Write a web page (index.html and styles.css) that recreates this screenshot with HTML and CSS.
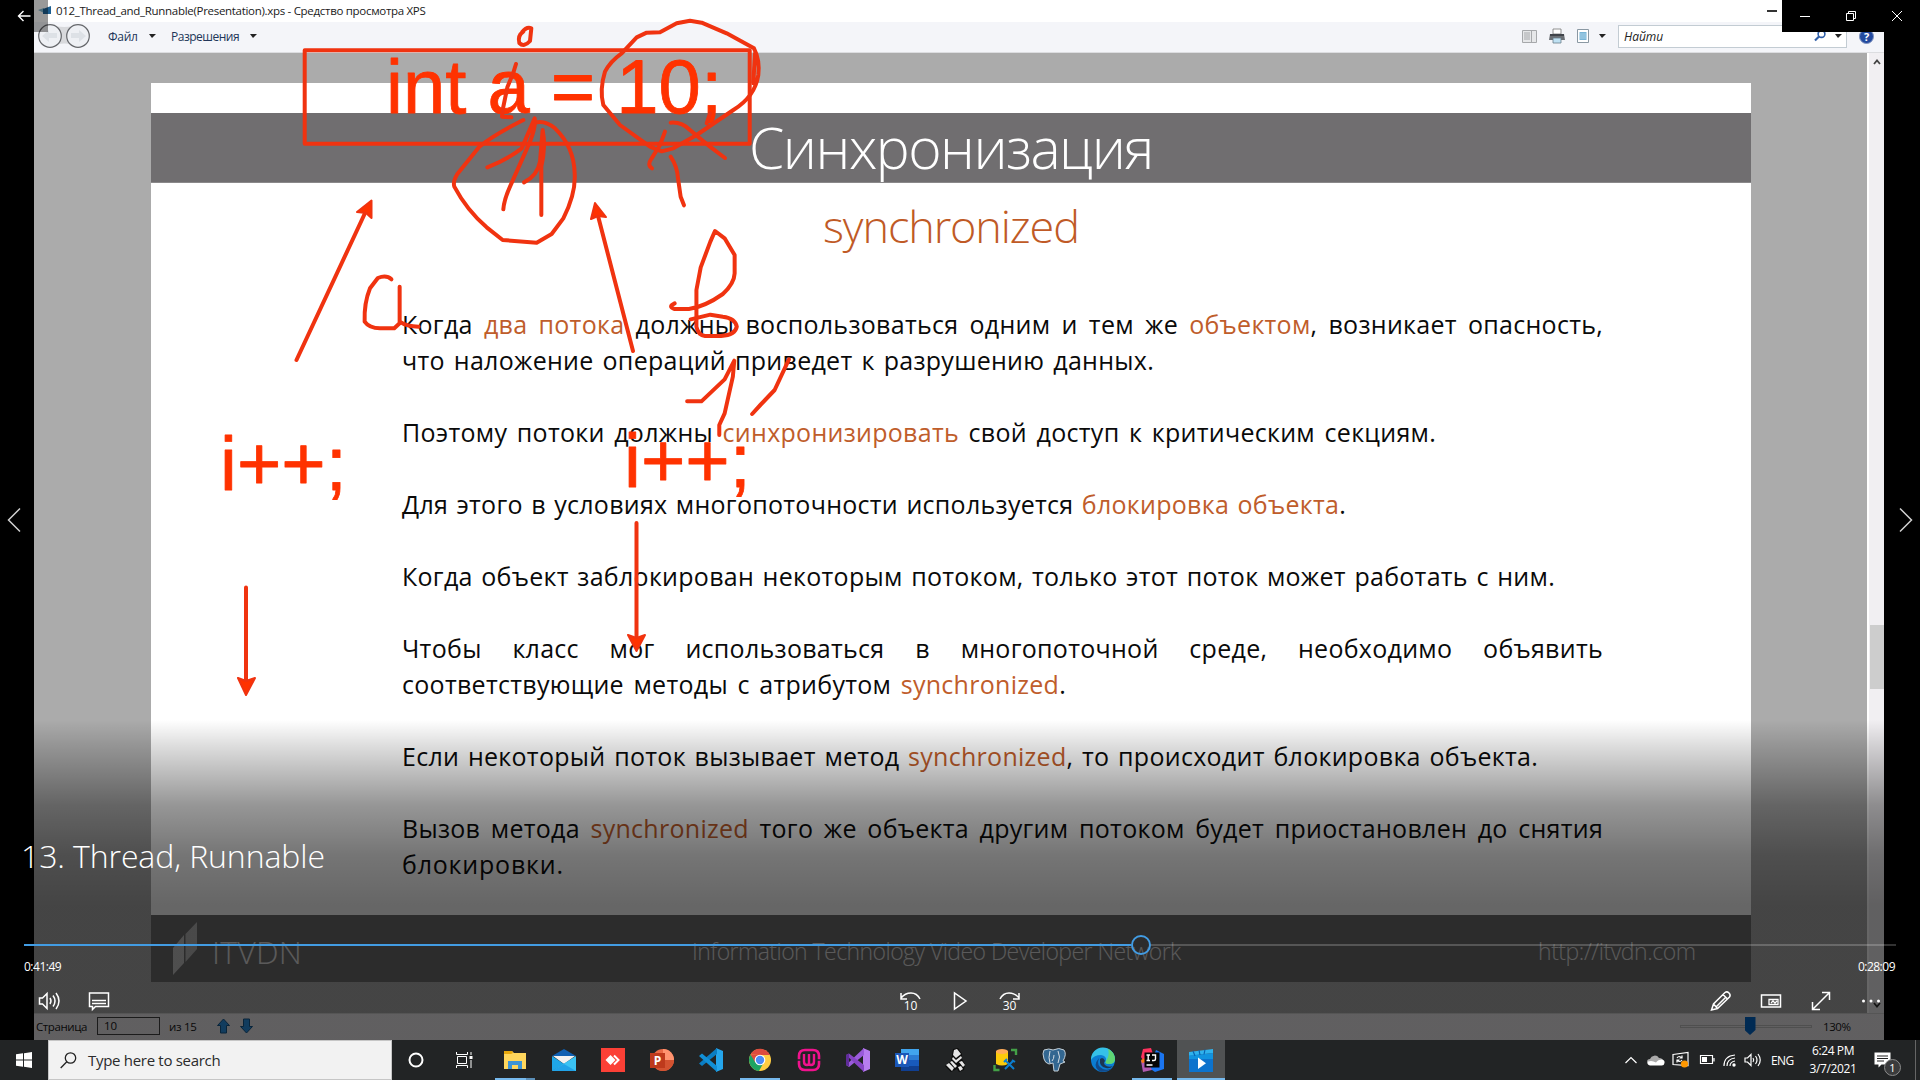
FILE: index.html
```html
<!DOCTYPE html>
<html lang="en">
<head>
<meta charset="utf-8">
<title>13. Thread, Runnable</title>
<link rel="stylesheet" href="styles.css">
</head>
<body>
<main class="player">
  <section class="viewer">
    <div class="titlebar">
      <svg class="app-icon" width="13" height="10" viewBox="0 0 13 10"><path d="M0 4l6-2v5z" fill="#7db4cc"/><path d="M5 3l8-3v8H5z" fill="#1d5f91"/></svg>
      <span class="titlebar-text">012_Thread_and_Runnable(Presentation).xps - Средство просмотра XPS</span>
      <span class="titlebar-min"></span>
    </div>
    <div class="toolbar">
      <svg class="nav-pair" width="54" height="28" viewBox="0 0 54 28"><path d="M12 3q15 4 31 0l5 21q-21-5-40 0z" fill="#d8d9dc"/><g fill="#eef0f4" stroke="#65676b" stroke-width="1.2"><circle cx="13" cy="14" r="11.3"/><circle cx="41" cy="14" r="11.3"/></g><g fill="#dde1e6"><path d="M5 14l7-6v3h8v5h-8v4z"/><path d="M49 14l-7-6v3h-8v5h8v4z"/></g></svg>
      <span class="menu menu-file">Файл</span><i class="caret"></i>
      <span class="menu menu-perm">Разрешения</span><i class="caret caret-perm"></i>
      <div class="toolbar-right">
        <svg width="15" height="15" viewBox="0 0 15 15"><path d="M.5 1.5h14v12H.5z" fill="#e6e7e9" stroke="#a6a8ab"/><path d="M9.5 2v11M2 4h6M2 6h6M2 8h6M2 10h6" stroke="#a6a8ab"/></svg>
        <svg width="16" height="16" viewBox="0 0 16 16"><path d="M4 1h8v5H4z" fill="#fff" stroke="#777" stroke-width=".8"/><path d="M1 6h14l1 6H0z" fill="#6b6f74"/><path d="M1 7h14" stroke="#2f3338" stroke-width="1.4"/><path d="M4 10h8v5H4z" fill="#bfe1f3" stroke="#6b7f8a" stroke-width=".8"/></svg>
        <svg width="12" height="15" viewBox="0 0 12 15"><path d="M.5.5h11v13H.5z" fill="#fff" stroke="#8a98a3"/><path d="M2.5 3h7v8h-7z" fill="#78b4d6"/><path d="M3 5h6M3 7h6M3 9h6" stroke="#bfe0f0" stroke-width=".7"/></svg>
        <i class="caret"></i>
        <div class="find"><span>Найти</span>
          <svg width="14" height="12" viewBox="0 0 14 12"><circle cx="8.5" cy="4" r="3.4" fill="none" stroke="#2f5ea8" stroke-width="1.6"/><path d="M6 6.5L2 10.5" stroke="#2f5ea8" stroke-width="2.2"/></svg>
          <i class="caret"></i></div>
        <div class="help">?</div>
      </div>
    </div>
    <div class="workspace">
      <article class="slide">
        <h1 class="slide-head"><span>Синхронизация</span></h1>
        <h2 class="slide-sub">synchronized</h2>
        <div class="slide-body">
          <p><span class="ln w-full">Когда <b>два потока</b> должны воспользоваться одним и тем же <b>объектом</b>, возникает опасность,</span><span class="ln w-2">что наложение операций приведет к разрушению данных.</span></p>
          <p><span class="ln w-3">Поэтому потоки должны <b>синхронизировать</b> свой доступ к критическим секциям.</span></p>
          <p><span class="ln w-4">Для этого в условиях многопоточности используется <b>блокировка объекта</b>.</span></p>
          <p><span class="ln w-5">Когда объект заблокирован некоторым потоком, только этот поток может работать с ним.</span></p>
          <p><span class="ln w-full">Чтобы класс мог использоваться в многопоточной среде, необходимо объявить</span><span class="ln w-7">соответствующие методы с атрибутом <b>synchronized</b>.</span></p>
          <p><span class="ln w-8">Если некоторый поток вызывает метод <b>synchronized</b>, то происходит блокировка объекта.</span></p>
          <p><span class="ln w-full">Вызов метода <b>synchronized</b> того же объекта другим потоком будет приостановлен до снятия</span><span class="ln w-10">блокировки.</span></p>
        </div>
        <footer class="slide-foot">
          <svg width="26" height="54" viewBox="0 0 26 54"><path d="M0 26L11 13v28L0 53z" fill="#c4c4c4"/><path d="M12.500 12L24 0v27L12.500 40z" fill="#d0d0d0" opacity=".75"/></svg>
          <span class="brand">ITVDN</span>
          <span class="network">Information Technology Video Developer Network</span>
          <span class="site">http://itvdn.com</span>
        </footer>
      </article>
      <div class="scrollbar">
        <svg width="8" height="6" viewBox="0 0 8 6"><path d="M1 5l3-3.500L7 5" fill="none" stroke="#444" stroke-width="1.800"/></svg>
        <i class="scroll-thumb"></i>
        <svg width="8" height="6" viewBox="0 0 8 6"><path d="M1 1l3 3.500L7 1" fill="none" stroke="#333" stroke-width="1.800"/></svg>
      </div>
    </div>
    <div class="statusbar">
      <span class="st-label">Страница</span><span class="st-input">10</span><span class="st-of">из 15</span>
      <svg width="38" height="16" viewBox="0 0 38 16" fill="#2b96ea" stroke="#16598f"><path d="M7.500 1l6 6.500h-3V15h-6V7.500h-3z"/><path d="M30.500 15l6-6.500h-3V1h-6v7.500h-3z"/></svg>
      <span class="zoom-track"><i class="zoom-thumb"></i></span><span class="zoom-val">130%</span>
    </div>
  </section>

  <svg class="ink" width="1920" height="1040" viewBox="0 0 1920 1040">
    <rect x="304.700" y="50.300" width="445" height="93.500"/>
    <g class="ink-text">
      <text x="386" y="112.500" textLength="336">int a = 10;</text>
      <text x="220" y="490">i++;</text>
      <text x="624" y="486.500">i++;</text>
    </g>
    <g transform="scale(.33333) translate(840 0)">
      <path d="M730 95q-18 12-12 34q14 14 32-6l4-38q-14-6-28 12"/>
      <path d="M708 192L700 218L682 262L668 330L666 350L694 352"/>
      <path d="M730 360Q640 405 598 440L532 522Q518 545 523 560Q560 630 620 682L668 720L770 728L815 702L850 655Q888 580 884 520Q882 440 825 385Q795 360 765 368"/>
      <path d="M622 502Q680 480 725 445L764 355Q768 380 750 425L690 560Q672 600 670 628M764 365L745 400"/>
      <path d="M732 547Q772 528 780 485L788 390Q798 440 784 500V645"/>
      <path d="M1025 160L1070 112L1100 98L1140 97L1190 70L1230 62L1265 68L1340 100L1422 145Q1440 180 1435 225Q1425 290 1360 330L1250 405L1180 445L1145 454L1110 440L1020 375L970 315Q958 270 975 215Q990 185 1025 160M1425 160L1420 250"/>
      <path d="M1172 368Q1205 365 1230 390L1290 440L1335 474M1155 395L1140 435L1115 475Q1100 495 1116 505"/>
      <path d="M1172 470Q1192 500 1194 535L1202 590L1212 616M1290 340L1280 370"/>
    </g>
    <path d="M366 211L296.500 360M597 212L633 351M636.500 523V645M246 587.500V688"/>
    <g class="heads"><path d="M371.500 200.500V218L366 213L357 212z"/><path d="M595 203L606 217L598 216L591 219z"/><path d="M636.500 651L628 635L636.500 638L645 635z"/><path d="M246 695L238 678L246 681L255 678z"/></g>
    <g transform="translate(280 180) scale(.35714 .33333)">
      <path d="M312 298Q298 284 274 294L252 325Q235 370 237 425Q250 445 280 445H320L335 430V320V425Q355 440 388 440"/>
      <path d="M1105 370Q1085 380 1105 387H1145Q1190 380 1240 342Q1272 310 1273 280V225L1245 175L1218 153L1205 185L1178 262L1166 330V440Q1170 465 1190 468H1235Q1275 465 1279 440Q1275 415 1240 410L1205 404L1150 418"/>
      <path d="M1140 664H1180L1245 598L1272 542L1268 590L1245 700L1230 735V765M1425 538L1385 630L1345 675L1322 702"/>
    </g>
  </svg>

  <div class="shade"></div>

  <div class="back-btn"><svg width="14" height="12" viewBox="0 0 14 12"><path d="M13.500 6H1.500M6.500 1L1.500 6l5 5" fill="none" stroke="#fff" stroke-width="1.400"/></svg></div>
  <div class="win-controls">
    <svg width="10" height="10" viewBox="0 0 10 10"><path d="M0 5.500h10"/></svg>
    <svg width="10" height="10" viewBox="0 0 10 10"><path d="M.5 2.500h7v7h-7zM2.500 2.500v-2h7v7h-2"/></svg>
    <svg width="10" height="10" viewBox="0 0 10 10"><path d="M0 0l10 10M10 0L0 10"/></svg>
  </div>
  <svg class="page-arrow prev" width="14" height="26" viewBox="0 0 14 26"><path d="M13 1.500L1.500 13L13 24.500"/></svg>
  <svg class="page-arrow next" width="14" height="26" viewBox="0 0 14 26"><path d="M1 1.500L12.500 13L1 24.500"/></svg>

  <div class="controls">
    <div class="video-title">13. Thread, Runnable</div>
    <div class="seek"><i class="played"></i><i class="knob"></i><i class="rest"></i></div>
    <div class="times"><span>0:41:49</span><span>0:28:09</span></div>
    <div class="buttons">
      <div class="group">
        <svg viewBox="0 0 22 20"><path d="M1.500 7v6h3L9 17.500v-15L4.500 7z"/><path d="M12 7q2 3 0 6M15 4.500q4 5.500 0 11M18 2q6 8 0 16"/></svg>
        <svg viewBox="0 0 22 20"><path d="M1.500 2h19v13.500H7.500l-3 3v-3h-3zM4 9.500h14M4 12.500h14"/></svg>
      </div>
      <div class="group">
        <svg viewBox="0 0 22 20"><path d="M2 7Q6 2 12 2T21 8M2 2v6h6"/><text x="11.500" y="18.500">10</text></svg>
        <svg viewBox="0 0 22 20"><path d="M5.500 2v16L17 10z"/></svg>
        <svg viewBox="0 0 22 20"><path d="M20 7Q16 2 10 2T1 8M20 2v6h-6"/><text x="10.500" y="18.500">30</text></svg>
      </div>
      <div class="group">
        <svg viewBox="0 0 22 20"><path d="M1.500 19l2-6L15 1.500q2-1.500 4 .5t.5 4L7.500 17.500zM13 3.500l4.500 4.500M3.500 13l4 4.500M16 6L6 16"/></svg>
        <svg viewBox="0 0 22 20"><path d="M1.500 4h19v12h-19z"/><path d="M9 8.500h9v5H9zM11 12l2-2 2 2 2-2" stroke-width="1.300"/></svg>
        <svg viewBox="0 0 22 20"><path d="M2.500 18.500l17-17M12 1.500h7.500V9M2.500 11v7.500H10"/></svg>
        <svg viewBox="0 0 22 20"><g fill="#fff" stroke="none"><circle cx="3.500" cy="10" r="1.500"/><circle cx="11" cy="10" r="1.500"/><circle cx="18.500" cy="10" r="1.500"/></g></svg>
      </div>
    </div>
  </div>
</main>

<nav class="taskbar">
  <div class="slot"><svg width="16" height="16" viewBox="0 0 16 16" fill="#fff"><path d="M0 2.300L7 1.300v6.200H0zM8 1.200L16 0v7.500H8zM0 8.500h7v6.200l-7-1zM8 8.500h8V16l-8-1.200z"/></svg></div>
  <div class="search"><svg width="17" height="17" viewBox="0 0 17 17"><circle cx="10.500" cy="6" r="5.200"/><path d="M6.800 9.800L.7 16"/></svg><span>Type here to search</span></div>
  <div class="slot"><svg width="16" height="16" viewBox="0 0 16 16"><circle cx="8" cy="8" r="6.500" fill="none" stroke="#fff" stroke-width="2"/></svg></div>
  <div class="slot"><svg width="17" height="16" viewBox="0 0 17 16" fill="none" stroke="#fff"><path d="M1.500 4.500h9v7h-9zM.5 0v2.500h11V0M.5 16v-2.500h11V16M15 0v3M15 8v8"/><path d="M13.500 4h3v3h-3z" fill="#fff" stroke="none"/></svg></div>
  <div class="apps">
    <div class="slot run multi"><svg viewBox="0 0 24 24"><path d="M1 3h8l2 2h12v16H1z" fill="#ffd65c"/><path d="M1 3h8l1 2-2 1H1z" fill="#e8a80c"/><path d="M5 13h14v8h-4v-4H9v4H5z" fill="#3d94d6"/></svg></div>
    <div class="slot"><svg viewBox="0 0 24 24"><path d="M0 8L12 1l12 7z" fill="#0f5fb2"/><path d="M1 8h22L12 16z" fill="#f1f1f1"/><path d="M0 8l12 8-12 7z" fill="#1fa7e8"/><path d="M24 8v15H0z" fill="#3bc3f4"/><path d="M12 16l12 7H0z" fill="#21a3e8"/></svg></div>
    <div class="slot"><svg viewBox="0 0 24 24"><path d="M0 0h24v24H0z" fill="#fb4036"/><path d="M9.500 7l5 5-5 5-5-5z" fill="#fff"/><path d="M13 7.500l4.500 4.500-4.500 4.500" fill="none" stroke="#fff" stroke-width="2"/></svg></div>
    <div class="slot"><svg viewBox="0 0 24 24"><circle cx="13" cy="12" r="11" fill="#ea6b47"/><path d="M13 1a11 11 0 0 1 11 11H13z" fill="#ff9470"/><path d="M2 12h22a11 11 0 0 1-22 0z" fill="#d35230"/><path d="M0 5h15v15H0z" fill="#be3a1c"/><text x="7.500" y="16.500">P</text></svg></div>
    <div class="slot"><svg viewBox="0 0 24 24"><path d="M17 0l7 3v18l-7 3z" fill="#25a6ec"/><path d="M18 0v6L3 18l-3-2.500z" fill="#0a7dc3"/><path d="M0 8l3-2.500L18 18v6z" fill="#118fd6"/></svg></div>
    <div class="slot run"><svg viewBox="0 0 24 24"><circle cx="12" cy="12" r="11" fill="#ffcd42"/><path d="M2.500 6.500a11 11 0 0 1 19.500 0.500H12z" fill="#dd4b3e"/><path d="M2.500 6.500A11 11 0 0 0 11 23l5-9-8-1z" fill="#1da462"/><path d="M2.500 6.500L7 14l5-7z" fill="#dd4b3e"/><circle cx="12" cy="12" r="5.300" fill="#fff"/><circle cx="12" cy="12" r="4.200" fill="#4c8bf5"/></svg></div>
    <div class="slot"><svg viewBox="0 0 24 24" fill="none" stroke="#f0128d"><path d="M8 2h8q6 0 6 6v8q0 6-6 6H8q-6 0-6-6V8q0-6 6-6z" stroke-width="2.600"/><path d="M7 6v7.500q0 3.500 3 3.500 2 0 2-2 0 2 2 2 3 0 3-3.500V6M12 6v10" stroke-width="2.400"/><path d="M0 12h4M20 12h4" stroke="#222425" stroke-width="1.500"/></svg></div>
    <div class="slot"><svg viewBox="0 0 24 24"><path d="M17 0l7 3v18l-7 3z" fill="#b77df0"/><path d="M18 0v7L3 19l-3-2z" fill="#9a5bdb"/><path d="M0 7l3-1.500L18 17v7z" fill="#8645c5"/><path d="M0 7l3-1.500V18.500L0 17z" fill="#5f2c99"/></svg></div>
    <div class="slot"><svg viewBox="0 0 24 24"><path d="M6 1h18v6H6z" fill="#41a5ee"/><path d="M6 7h18v5H6z" fill="#2b7cd3"/><path d="M6 12h18v6H6z" fill="#185abd"/><path d="M6 18h18v5H6z" fill="#103f91"/><path d="M0 5h14v14H0z" fill="#1b57b8"/><text x="7" y="16">W</text></svg></div>
    <div class="slot"><svg viewBox="0 0 24 24"><path d="M9 1l5-1 4 6v5l3 5-1 6-5 2-2-3-6 3-6-6 6-5 1-6z" fill="#0c0c0c"/><path d="M10 2l3-1 4 5-5 4-3-3zM9 9l3 3 5-4 1 2-6 5-4-4zM2 17l3-2 5 5-2 3zM6 14l2-1 5 5-2 2zM15 14l3-1 3 4-2 2zM14 19l3-1 2 3-3 2z" fill="#e6e6e6"/></svg></div>
    <div class="slot"><svg viewBox="0 0 24 24"><path d="M3 3v13q6 3 12 0V3z" fill="#fccb0b"/><ellipse cx="9" cy="3.500" rx="6" ry="2.500" fill="#ffac59"/><path d="M18 2h5v5M1.500 17v5h5" fill="none" stroke="#43a047" stroke-width="2.400"/><path d="M13 13l8 8M20 13l-8 8M11 14l3-3M19 12l3 2" stroke="#0c7fd1" stroke-width="2"/></svg></div>
    <div class="slot"><svg viewBox="0 0 24 24"><path d="M2 2q5-2 9 0 6-3 11 0 3 4-1 11l2 1-5 2-2 7h-4l-1-8-4 1Q3 15 2 11 0 5 2 2z" fill="#336791" stroke="#c5d0d8"/><path d="M8 3q-2 7 0 12M16 3q3 6 0 12M10 13q2-2 2-6" fill="none" stroke="#d5dde3"/></svg></div>
    <div class="slot"><svg viewBox="0 0 24 24"><circle cx="12" cy="12" r="12" fill="#0b7dd3"/><path d="M0 12A12 12 0 0 1 24 11q0 5-6 5-5 0-3-3 1-5-5-6Q3 7 0 12z" fill="#35c1e8"/><path d="M17 1a12 12 0 0 1 7 10q0 5-6 5-5 0-3-3 4-6 2-12z" fill="#5fd673"/><path d="M8 10q-3 8 4 11 6 2 10-2A12 12 0 0 1 8 23q-7-5 0-13z" fill="#114a8b"/><path d="M9 11q-1 8 6 9 4 1 7-2-5 2-8-1-2-2 0-4-1-3-3-3z" fill="#1c3552"/></svg></div>
    <div class="slot run"><svg viewBox="0 0 24 24"><path d="M3 1l8-1 3 9-10 5-3-5z" fill="#fe315d"/><path d="M16 2l8 4v15l-9 3-6-4z" fill="#1b75f0"/><path d="M1 13l5-3 6 12-9 2z" fill="#b05ab0"/><path d="M1 12l4-2 1 4-4 1z" fill="#f97a12"/><path d="M4.500 4.500h15v15h-15z" fill="#050505"/><path d="M6.500 7h3.500M8.200 7v5.500M6.500 12.500h3.500M12 7h3.500v4q0 1.500-1.500 1.500h-2M6.500 17h6" fill="none" stroke="#fff" stroke-width="1.400"/></svg></div>
    <div class="slot run active"><svg viewBox="0 0 24 24"><path d="M0 10h24v14H0z" fill="#0d73cd"/><path d="M0 4l24-3v4L0 8z" fill="#2fb2ed"/><path d="M0 7.500L24 5v6H0z" fill="#1193df"/><path d="M4 3l2 5M10 2l1 5M16 1.500l-1 5" stroke="#0a62b0" stroke-width="1.200"/><path d="M9 9.500l8 5.700-8 5.700z" fill="#fff"/></svg></div>
  </div>
  <div class="tray">
    <svg width="12" height="8" viewBox="0 0 12 8"><path d="M.5 7L6 1.500 11.500 7"/></svg>
    <svg width="17" height="11" viewBox="0 0 17 11"><path d="M3 10a3 3 0 0 1 0-6 5 5 0 0 1 9-1q4 0 4.500 4 0 3-3 3z" fill="#aaa" stroke="none"/><path d="M3 10.500h11a3 3 0 0 0 1-6q-4 0-6 3Q5 5 1 6.500q-1 3 2 4z" fill="#fff" stroke="none"/></svg>
    <svg width="17" height="16" viewBox="0 0 17 16"><path d="M1 2.500l15-2v13l-15-1zM5 6q2-3 5 0M10 3.500V6H7.500M10 8q-2 3-5 0M5 10.500V8h2.500" /><circle cx="12.500" cy="12" r="3.600" fill="#ff9800" stroke="none"/></svg>
    <svg width="15" height="10" viewBox="0 0 15 10"><path d="M.5.5h12v8H.5zM14 3v3.500"/><path d="M2 2h5v5H2z" fill="#fff" stroke="none"/></svg>
    <svg width="13" height="13" viewBox="0 0 13 13"><path d="M1 12Q1 2 12 1M4 12Q4 5 12 4M7 12Q7 8 12 7"/><circle cx="11" cy="11" r="1.700" fill="#fff" stroke="none"/></svg>
    <svg width="17" height="14" viewBox="0 0 17 14"><path d="M1 5v4h2.500L7 12.500v-11L3.500 5zM9 5q1.500 2 0 4M11.500 3q3 4 0 8M14 1q4.500 6 0 12"/></svg>
    <span class="lang">ENG</span>
    <div class="clock"><span>6:24 PM</span><span>3/7/2021</span></div>
    <div class="notify"><svg width="17" height="16" viewBox="0 0 17 16"><path d="M.5.500h16v12h-9l-3 3v-3h-4z" fill="#fff" stroke="none"/><path d="M3 4h11M3 6.500h11M3 9h7" stroke="#222"/></svg><i>1</i></div>
    <div class="peek"></div>
  </div>
</nav>
</body>
</html>
```
FILE: styles.css
```css
* { box-sizing: border-box; }
body {
  margin: 0;
  width: 1920px;
  height: 1080px;
  overflow: hidden;
  display: flex;
  flex-direction: column;
  background: #000;
  font-family: "Open Sans", "Noto Sans", sans-serif;
}
svg { display: block; flex: none; overflow: visible; }
i { font-style: normal; display: block; flex: none; }

.player { position: relative; height: 1040px; flex: none; background: #000; }

/* XPS viewer window shown in the video frame */
.viewer { margin: 0 36px 0 34px; height: 1040px; display: flex; flex-direction: column; background: #ababab; }
.titlebar { height: 22px; background: #fff; display: flex; align-items: center; padding: 0 107px 0 4px; }
.app-icon { margin-right: 5px; }
.titlebar-text { font-size: 11.500px; color: #1a1a1a; white-space: nowrap; line-height: 22px; letter-spacing: -.3px; }
.titlebar-min { width: 10px; height: 2px; background: #333; margin-left: auto; }
.toolbar { height: 31px; background: #f4f5f9; border-bottom: 1px solid #dcdde0; display: flex; align-items: center; padding: 0 0 2px 3px; }
.menu { font-size: 12px; color: #223558; white-space: nowrap; }
.menu-file { margin-left: 17px; width: 41px; letter-spacing: -.3px; }
.menu-perm { margin-left: 15px; width: 77px; letter-spacing: -.5px; }
.caret { width: 0; height: 0; border: 4px solid transparent; border-top-color: #222; border-bottom: 0; border-left-width: 3.500px; }
.toolbar .caret-perm { margin-left: 2px; }
.toolbar-right { margin-left: auto; display: flex; align-items: center; padding-right: 10px; gap: 12px; }
.toolbar-right > .caret { margin-left: -2px; }
.find { width: 229px; height: 23px; border: 1px solid #c3ccd3; background: #fff; display: flex; align-items: center; padding: 0 4px 0 5px; }
.find span { flex: 1; font-size: 12px; font-style: italic; color: #222; }
.find .caret { margin-left: 8px; }
.help { width: 15px; height: 15px; border-radius: 50%; background: #234a9f; border: 1px solid #7f93c0; color: #fff; font-size: 11px; font-weight: 700; line-height: 13px; text-align: center; }

.workspace { flex: 1; display: flex; justify-content: space-between; padding-left: 117px; }
.slide { width: 1600px; height: 899px; margin-top: 30px; background: #fff; display: flex; flex-direction: column; }
.slide h1, .slide h2, .slide p { margin: 0; font-weight: 300; }
.slide .slide-head { margin-top: 30px; height: 70px; background: #706e70; border-bottom: 1px solid #8a898a; color: #fff; font-size: 57px; line-height: 69px; padding-left: 598px; white-space: nowrap; letter-spacing: -1.500px; }
.slide .slide-sub { height: 84px; margin-top: 1px; padding-left: 672px; color: #c05a26; font-size: 45px; line-height: 84px; letter-spacing: -1.100px; white-space: nowrap; }
.slide-body { margin: 38px 0 0 251px; display: flex; flex-direction: column; gap: 36px; color: #0a0a0a; }
.slide-body p { font-size: 25px; line-height: 36px; font-weight: 400; }
.slide-body b { font-weight: 400; color: #bf5d2b; }
.ln { display: block; height: 36px; white-space: nowrap; text-align: justify; text-align-last: justify; letter-spacing: .28px; word-spacing: -1.500px; }
.w-full { width: 1201px; }
.w-2 { width: 752px; }
.w-3 { width: 1034px; }
.w-4 { width: 944px; }
.w-5 { width: 1153px; }
.w-7 { width: 664px; }
.w-8 { width: 1136px; }
.ln.w-10 { width: 160px; letter-spacing: .8px; }
.slide-foot { margin-top: auto; height: 67px; background: #6e6d6e; display: flex; align-items: center; padding-left: 22px; color: #fff; font-weight: 300; white-space: nowrap; }
.slide-foot span { opacity: .8; }
.brand { width: 480px; margin: 5px 0 0 13px; font-size: 32px; letter-spacing: .2px; }
.network { width: 846px; margin-top: 4px; font-size: 23px; letter-spacing: -.55px; }
.site { margin-top: 4px; font-size: 23px; letter-spacing: -.45px; }

.scrollbar { width: 17px; border-left: 2px solid #fff; background: #f1eff2; display: flex; flex-direction: column; align-items: center; padding: 6px 0 5px; }
.scroll-thumb { width: 14px; height: 64px; background: #cdcdcd; margin: 560px 0 auto; }
.statusbar { height: 27px; flex: none; background: #f1eef1; border-top: 1px solid #d5d5d5; display: flex; align-items: center; padding: 0 0 2px 2px; font-size: 11.500px; color: #151515; white-space: nowrap; }
.st-label { width: 61px; letter-spacing: -.4px; }
.st-input { width: 63px; height: 18px; border: 1px solid #444; line-height: 15px; padding-left: 6px; }
.st-of { width: 56px; padding-left: 9px; letter-spacing: -.3px; }
.zoom-track { width: 132px; height: 3px; border: 1px solid #c6c6c6; margin-left: 1426px; display: flex; justify-content: center; align-items: center; padding-left: 8px; }
.zoom-thumb { width: 11px; height: 18px; background: #0069cf; clip-path: polygon(0 0, 100% 0, 100% 72%, 50% 100%, 0 72%); }
.zoom-val { margin-left: 11px; letter-spacing: -.4px; }

/* Presenter's pen strokes */
.ink { position: absolute; inset: 0; fill: none; stroke: #f03310; stroke-width: 4; stroke-linecap: round; stroke-linejoin: round; }
.ink path { vector-effect: non-scaling-stroke; }
.ink-text { font: 76px "Liberation Sans", sans-serif; fill: #ff3200; stroke: #ff3200; stroke-width: .8; white-space: pre; }
.heads { fill: #ff3200; stroke-width: 2; }

.shade { position: absolute; left: 0; right: 0; top: 720px; bottom: 0; background: linear-gradient(rgba(0,0,0,0), rgba(0,0,0,.13) 25px, rgba(0,0,0,.41) 85px, rgba(0,0,0,.54) 135px, rgba(0,0,0,.6) 185px); }

.back-btn { position: absolute; left: 0; top: 0; width: 48px; height: 32px; background: rgba(0,0,0,.4); display: flex; align-items: center; justify-content: center; }
.win-controls { position: absolute; right: 0; top: 0; width: 138px; height: 32px; background: #000; display: flex; align-items: center; justify-content: space-around; fill: none; stroke: #fff; stroke-width: 1; }
.page-arrow { position: absolute; top: 507px; fill: none; stroke: #d0d0d0; stroke-width: 1.500; }
.prev { left: 7px; }
.next { right: 7px; }

.controls { position: absolute; left: 24px; right: 24px; bottom: 0; height: 208px; display: flex; flex-direction: column; color: #fff; }
.video-title { height: 104px; margin-left: -3px; line-height: 47px; font-size: 32px; font-weight: 300; letter-spacing: -.1px; white-space: nowrap; }
.seek { height: 18px; display: flex; align-items: center; }
.played { width: 1107px; height: 2px; background: #429ce3; }
.knob { width: 20px; height: 20px; border: 2px solid #429ce3; border-radius: 50%; }
.rest { flex: 1; height: 2px; background: rgba(255,255,255,.2); }
.times { height: 25px; display: flex; justify-content: space-between; font-size: 12px; line-height: 25px; letter-spacing: -.5px; }
.times span:last-child { margin-right: 1px; }
.buttons { height: 44px; display: grid; grid-template-columns: 1fr 1fr 1fr; align-items: center; }
.group { display: flex; gap: 28px; padding: 0 14px; fill: none; stroke: #fff; stroke-width: 1.500; }
.group:nth-child(2) { justify-content: center; }
.group:nth-child(3) { justify-content: flex-end; }
.group svg { width: 22px; height: 20px; }
.group text { font-size: 12px; fill: #fff; stroke: none; text-anchor: middle; }

/* Windows taskbar */
.taskbar { height: 40px; flex: none; background: #222425; display: flex; color: #fff; }
.slot { width: 48px; height: 40px; display: flex; align-items: center; justify-content: center; flex: none; }
.search { width: 344px; background: #f2f2f2; border: 1px solid #c6c6c6; display: flex; align-items: center; padding-left: 11px; gap: 11px; color: #2b2b2b; font-size: 15px; white-space: nowrap; letter-spacing: -.3px; }
.search svg { fill: none; stroke: #222; stroke-width: 1.300; }
.apps { display: flex; gap: 1px; margin-left: 3px; }
.apps svg { width: 24px; height: 24px; }
.apps text { font-size: 12px; font-weight: 700; fill: #fff; text-anchor: middle; }
.run { background: linear-gradient(#76b9ed, #76b9ed) center bottom / 40px 2px no-repeat; }
.multi { background: linear-gradient(90deg, #76b9ed 31px, #5b8fb8 31px) center bottom / 40px 2px no-repeat; }
.active { background: linear-gradient(#76b9ed, #76b9ed) center bottom / 48px 2px no-repeat #505253; }
.tray { margin-left: auto; display: flex; align-items: center; height: 40px; fill: none; stroke: #fff; stroke-width: 1.200; }
.tray svg + svg { margin-left: 8px; }
.tray svg:first-child { margin-right: 2px; }
.tray svg:nth-child(-n+3) { position: relative; left: -3px; }
.lang { margin-left: 10px; width: 39px; font-size: 12px; letter-spacing: -.6px; }
.clock { width: 46px; display: flex; flex-direction: column; align-items: center; font-size: 12px; line-height: 18px; letter-spacing: -.4px; white-space: nowrap; }
.notify { position: relative; margin: 0 19px 0 21px; }
.notify i { position: absolute; left: 7px; top: 7px; width: 17px; height: 17px; border-radius: 50%; border: 1px solid #8c8c8c; background: #3a3b3c; font-size: 11px; line-height: 15px; text-align: center; }
.peek { width: 5px; height: 40px; border-left: 1px solid #666; }
```
